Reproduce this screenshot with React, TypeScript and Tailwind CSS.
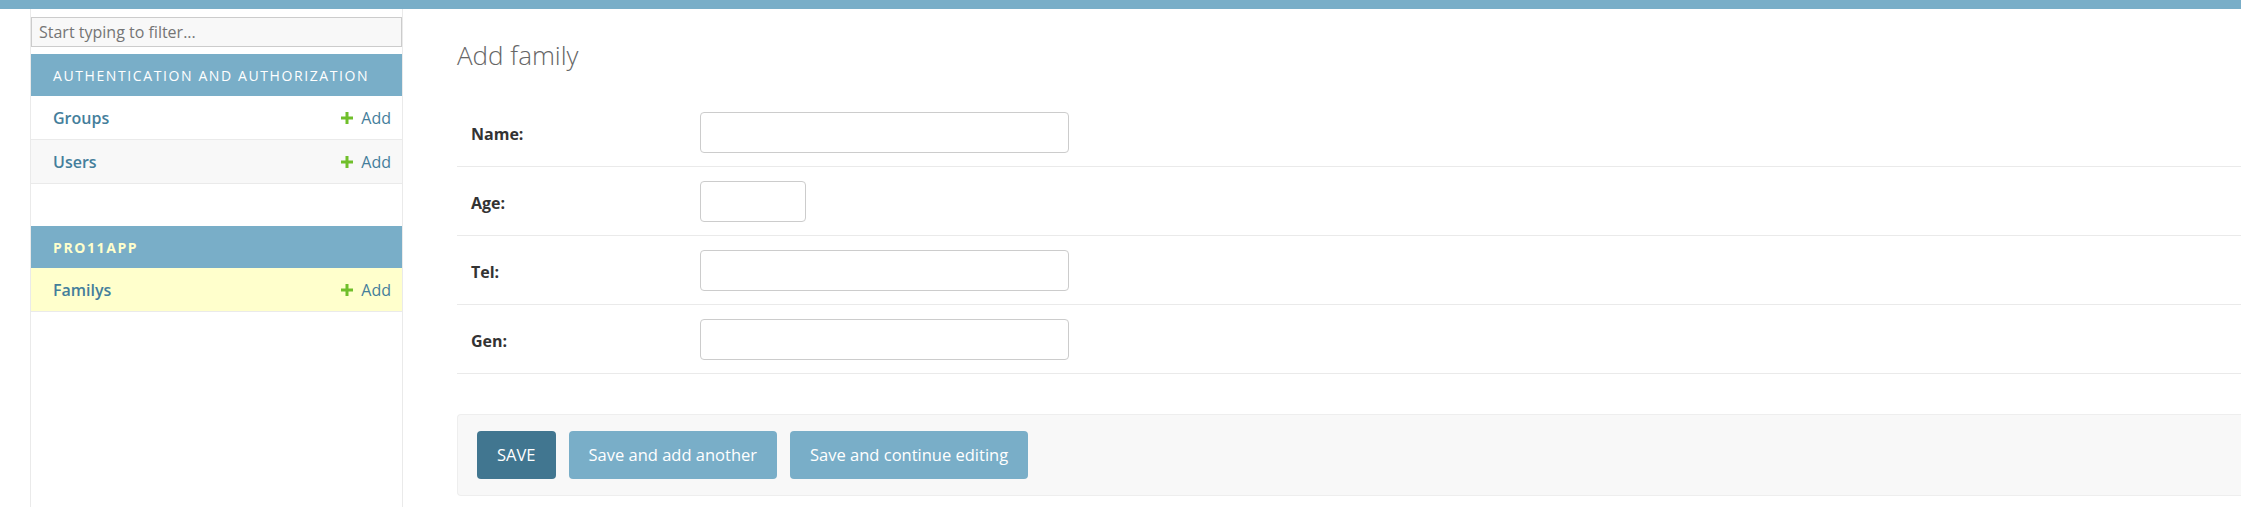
import React from 'react';

const font = { fontFamily: '"Open Sans", "Noto Sans", sans-serif' };

function PlusIcon() {
  return (
    <svg width="12" height="12" viewBox="0 0 12 12" className="shrink-0">
      <path d="M4.5 0h3v4.5H12v3H7.5V12h-3V7.5H0v-3h4.5z" fill="#70bf2b" />
    </svg>
  );
}

type ModelRow = { name: string; shade?: string };

function AppModule({ title, rows, current }: { title: string; rows: ModelRow[]; current?: boolean }) {
  return (
    <div>
      <div
        className={
          'h-[42px] flex items-center pl-[22px] bg-[#79aec8] text-[14px] uppercase tracking-[1.6px] ' +
          (current ? 'text-[#ffffcc] font-bold' : 'text-white')
        }
      >
        {title}
      </div>
      {rows.map((r) => (
        <div
          key={r.name}
          className={'h-[44px] flex items-center justify-between pl-[22px] pr-[11px] border-b border-[#eaeaea] ' + (r.shade ?? 'bg-white')}
        >
          <span className="text-[16px] font-semibold text-[#447e9b]">{r.name}</span>
          <span className="flex items-center gap-2 text-[16px] text-[#447e9b]">
            <PlusIcon />
            Add
          </span>
        </div>
      ))}
    </div>
  );
}

function FormRow({ label, inputWidth }: { label: string; inputWidth: string }) {
  return (
    <div className="flex items-center h-[69px] pl-[14px] border-b border-[#eaeaea]">
      <label className="w-[229px] pt-[3px] text-[16px] font-bold text-[#333]">{label}</label>
      <input type="text" className={'h-[41px] rounded-[4px] border border-[#cccccc] bg-white ' + inputWidth} />
    </div>
  );
}

export default function App() {
  return (
    <div className="min-h-[507px] bg-white flex flex-col" style={font}>
      <div className="h-[9px] bg-[#79aec8]" />
      <div className="flex flex-1">
        {/* sidebar */}
        <nav className="ml-[30px] w-[373px] shrink-0 border-x border-[#eaeaea] pt-[8px] min-h-[498px]">
          <input
            type="text"
            placeholder="Start typing to filter..."
            className="w-full h-[30px] px-[7px] text-[16px] bg-[#f8f8f8] border border-[#cccccc] placeholder:text-[#757575] outline-none"
          />
          <div className="mt-[7px]">
            <AppModule
              title="Authentication and Authorization"
              rows={[{ name: 'Groups' }, { name: 'Users', shade: 'bg-[#f8f8f8]' }]}
            />
          </div>
          <div className="mt-[42px]">
            <AppModule title="Pro11app" current rows={[{ name: 'Familys', shade: 'bg-[#ffffcc]' }]} />
          </div>
        </nav>

        {/* main content */}
        <main className="flex-1 pl-[54px]">
          <h1 className="mt-[29px] h-[60px] text-[26px] font-light text-[#666] leading-[34px]">Add family</h1>
          <fieldset>
            <FormRow label="Name:" inputWidth="w-[369px]" />
            <FormRow label="Age:" inputWidth="w-[106px]" />
            <FormRow label="Tel:" inputWidth="w-[369px]" />
            <FormRow label="Gen:" inputWidth="w-[369px]" />
          </fieldset>
          <div className="mt-[40px] flex gap-[13px] pl-[19px] py-4 bg-[#f8f8f8] border border-r-0 border-[#eeeeee] rounded-l-[4px]">
            <button className="h-[48px] px-5 rounded-[4px] bg-[#417690] text-white text-[16.5px]">SAVE</button>
            <button className="h-[48px] px-5 rounded-[4px] bg-[#79aec8] text-white text-[16.5px]">Save and add another</button>
            <button className="h-[48px] px-5 rounded-[4px] bg-[#79aec8] text-white text-[16.5px]">Save and continue editing</button>
          </div>
        </main>
      </div>
    </div>
  );
}
